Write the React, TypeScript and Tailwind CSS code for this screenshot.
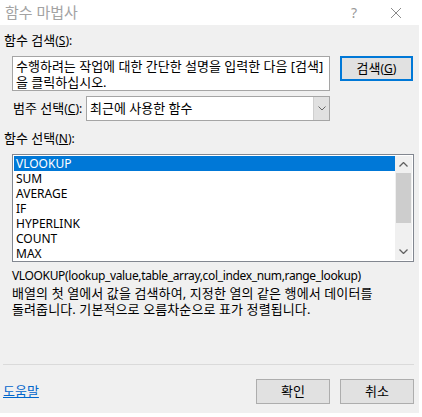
import React from "react";

const font = { fontFamily: '"Noto Sans", "Noto Sans CJK KR", sans-serif' };

const items = ["VLOOKUP", "SUM", "AVERAGE", "IF", "HYPERLINK", "COUNT", "MAX"];

function K({ children }: { children: React.ReactNode }) {
  return <span className="text-[13px]">{children}</span>;
}

export default function App() {
  return (
    <div className="w-[422px] h-[417px] bg-white text-[12px] text-black" style={font}>
      <div className="w-[419px] h-[413px] bg-[#f0f0f0] flex flex-col">
        {/* Title bar */}
        <div className="h-[25px] bg-white flex items-center">
          <span className="ml-[5px] text-[#a3a3a3] text-[15px] leading-none">함수 마법사</span>
          <span className="ml-auto mr-[33px] text-[#9a9a9a] text-[14px]">?</span>
          <svg width="12" height="12" viewBox="0 0 12 12" className="mr-[17px]">
            <path d="M1 1 L11 11 M11 1 L1 11" stroke="#8a8a8a" strokeWidth="1" />
          </svg>
        </div>

        {/* 함수 검색 */}
        <div className="mt-[7px] ml-[4px] h-[16px] leading-[16px]">
          <K>함수 검색</K>(<span className="underline">S</span>):
        </div>
        <div className="mt-[8px] flex items-start">
          <div className="ml-[12px] w-[318px] h-[35px] bg-white border border-[#a5a5a5] px-[3px] pt-[1px] leading-[16px] text-[13px]">
            수행하려는 작업에 대한 간단한 설명을 입력한 다음 [검색]
            <br />을 클릭하십시오.
          </div>
          <button className="ml-[10px] w-[73px] h-[25px] bg-[#e1e1e1] border-2 border-[#0078d7] flex items-center justify-center leading-none">
            <K>검색</K>(<span className="underline">G</span>)
          </button>
        </div>

        {/* 범주 선택 */}
        <div className="mt-[5px] flex items-center h-[25px]">
          <span className="ml-[13px] w-[73px] whitespace-nowrap">
            <K>범주 선택</K>(<span className="underline">C</span>):
          </span>
          <div className="w-[244px] h-[25px] bg-white border border-[#a5a5a5] flex items-center">
            <span className="ml-[3px] flex-1 text-[13px]">최근에 사용한 함수</span>
            <div className="w-[16px] h-[23px] bg-[#e1e1e1] border-l border-[#cfcfcf] flex items-center justify-center">
              <svg width="8" height="5" viewBox="0 0 8 5">
                <path d="M0.5 0.5 L4 4 L7.5 0.5" stroke="#666" strokeWidth="1" fill="none" />
              </svg>
            </div>
          </div>
        </div>

        {/* 함수 선택 */}
        <div className="mt-[9px] ml-[4px] h-[16px] leading-[16px]">
          <K>함수 선택</K>(<span className="underline">N</span>):
        </div>
        <div className="mt-[8px] ml-[12px] w-[402px] h-[108px] bg-white border border-[#828790] flex p-[1px]">
          <div className="flex-1 flex flex-col">
            {items.map((it, i) => (
              <div
                key={it}
                className={
                  "h-[15px] leading-[15px] pl-[2px] " +
                  (i === 0 ? "bg-[#0078d7] text-white" : "")
                }
              >
                {it}
              </div>
            ))}
          </div>
          <div className="w-[17px] bg-[#f0f0f0] flex flex-col items-center">
            <div className="h-[17px] flex items-center justify-center">
              <svg width="9" height="5" viewBox="0 0 9 5">
                <path d="M0.5 4.5 L4.5 0.5 L8.5 4.5" stroke="#606060" strokeWidth="1.3" fill="none" />
              </svg>
            </div>
            <div className="w-[15px] h-[50px] bg-[#cdcdcd]" />
            <div className="flex-1" />
            <div className="h-[17px] flex items-center justify-center">
              <svg width="9" height="5" viewBox="0 0 9 5">
                <path d="M0.5 0.5 L4.5 4.5 L8.5 0.5" stroke="#606060" strokeWidth="1.3" fill="none" />
              </svg>
            </div>
          </div>
        </div>

        {/* Formula description */}
        <div className="mt-[6px] ml-[12px] leading-[16px] tracking-[-0.35px]">
          VLOOKUP(lookup_value,table_array,col_index_num,range_lookup)
        </div>
        <div className="mt-[1px] ml-[12px] leading-[16px] text-[13px] tracking-[0.1px]">
          배열의 첫 열에서 값을 검색하여, 지정한 열의 같은 행에서 데이터를
          <br />
          돌려줍니다. 기본적으로 오름차순으로 표가 정렬됩니다.
        </div>

        <div className="flex-1" />

        {/* Separator */}
        <div className="ml-[3px] w-[411px] h-[1px] bg-[#dadada]" />

        {/* Footer */}
        <div className="mt-[14px] mb-[9px] flex items-center h-[25px]">
          <span className="ml-[3px] text-[#0066cc] underline text-[13px]">도움말</span>
          <button className="ml-auto w-[74px] h-[25px] bg-[#e1e1e1] border border-[#adadad] leading-none text-[13px]">
            확인
          </button>
          <button className="ml-[10px] mr-[5px] w-[74px] h-[25px] bg-[#e1e1e1] border border-[#adadad] leading-none text-[13px]">
            취소
          </button>
        </div>
      </div>
    </div>
  );
}
